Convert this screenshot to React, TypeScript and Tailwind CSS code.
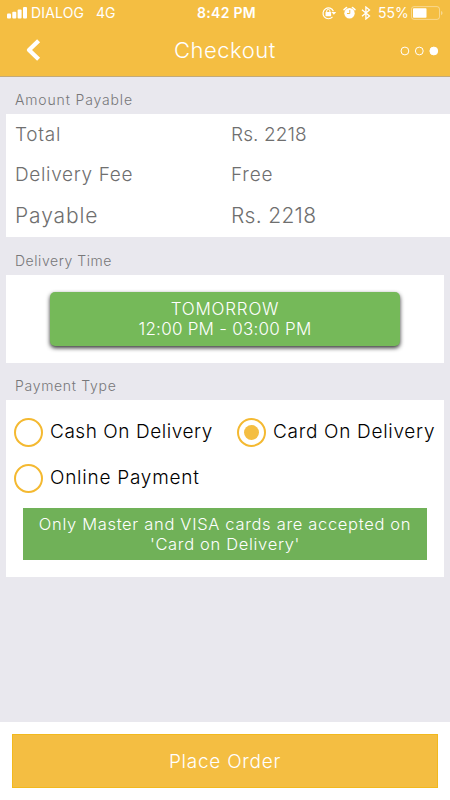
import { useState } from "react"

const amounts = [
  { label: "Total", value: "Rs. 2218", row: "h-[40px] text-[19px]", labelText: "tracking-[0.7px]", valueText: "tracking-[0.1px]" },
  { label: "Delivery Fee", value: "Free", row: "h-[41px] text-[19px]", labelText: "tracking-[0.65px]", valueText: "tracking-[0.8px]" },
  { label: "Payable", value: "Rs. 2218", row: "h-[39px] text-[21px]", labelText: "tracking-[0.9px]", valueText: "tracking-[0.3px]" },
]

const methods = [
  { id: "cash", label: "Cash On Delivery", width: "w-[223px]", text: "tracking-[0.55px]" },
  { id: "card", label: "Card On Delivery", width: "w-[206px]", text: "tracking-[0.7px]" },
  { id: "online", label: "Online Payment", width: "w-[223px]", text: "tracking-[0.75px]" },
]

function StatusBar() {
  return (
    <div className="flex h-[25px] items-center text-[14px] font-normal leading-none">
      <svg className="ml-[7px] h-[12px] w-[20px]" viewBox="0 0 20 12" fill="white">
        <rect x="0" y="6.5" width="4" height="5" rx="1" />
        <rect x="5.3" y="4.8" width="4" height="6.7" rx="1" />
        <rect x="10.6" y="2.6" width="4" height="8.9" rx="1" />
        <rect x="16" y="0" width="4" height="11.5" rx="1" />
      </svg>
      <span className="ml-[4px] w-[65px] whitespace-nowrap tracking-[0.15px]">DIALOG</span>
      <span className="w-[101px]">4G</span>
      <span className="w-[125px] whitespace-nowrap font-semibold tracking-[0.3px]">8:42 PM</span>

      {/* rotation lock */}
      <svg className="h-[14px] w-[15px]" viewBox="0 0 15 14" fill="none" stroke="white">
        <path d="M10.5 10.9A5.4 5.4 0 1 1 11.4 5.2" strokeWidth="1.2" />
        <path d="M9.4 6h4.8l-2.3 2.8z" fill="white" stroke="none" />
        <rect x="3.5" y="6" width="5.6" height="4.2" rx="0.5" fill="white" stroke="none" />
        <path d="M4.7 6.3V5a1.6 1.6 0 0 1 3.2 0v1.3" strokeWidth="1" />
      </svg>
      {/* alarm */}
      <svg className="ml-[6px] h-[14px] w-[13px]" viewBox="0 0 13 14">
        <circle cx="6.5" cy="7.2" r="5.2" fill="white" />
        <path d="M1.1 3.7L3.5 1.5M11.9 3.7L9.5 1.5" stroke="white" strokeWidth="1.6" strokeLinecap="round" />
        <path d="M6.8 4v3.5H4" stroke="#f4be42" strokeWidth="1" fill="none" />
      </svg>
      {/* bluetooth */}
      <svg className="ml-[5px] h-[14px] w-[10px]" viewBox="0 0 10 14" fill="none" stroke="white" strokeWidth="1.3">
        <path d="M1 3.7L8.5 10.1 4.9 13V1l3.6 2.9L1 10.3" />
      </svg>
      <span className="ml-[7px] w-[33px] whitespace-nowrap">55%</span>
      <svg className="h-[14px] w-[32px]" viewBox="0 0 32 14">
        <rect x="0.5" y="0.6" width="28" height="12.8" rx="2.5" fill="none" stroke="white" strokeOpacity="0.4" />
        <rect x="2" y="2.2" width="13.5" height="9.6" rx="0.8" fill="white" />
        <path d="M30 5v4.2q1.6-0.6 1.6-2.1t-1.6-2.1z" fill="white" fillOpacity="0.4" />
      </svg>
    </div>
  )
}

function SectionLabel({ children, className }: { children: string; className: string }) {
  return <h2 className={`flex items-center pl-[15px] text-[14px] text-[#777779] ${className}`}>{children}</h2>
}

export default function App() {
  const [method, setMethod] = useState("card")

  return (
    <div className="flex h-[800px] w-[450px] flex-col overflow-hidden bg-[#e9e8ee] font-['Inter',sans-serif] font-light">
      <header className="h-[77px] shrink-0 border-b border-[#c2aa7a] bg-[#f4be42] text-white">
        <StatusBar />
        <div className="flex h-[50px] items-center">
          <button className="ml-[25px] w-[149px]">
            <svg className="h-[24px] w-[16px]" viewBox="0 0 16 24" fill="none" stroke="white" strokeWidth="4.3" strokeLinejoin="round">
              <path d="M13.6 2.8L4 12l9.6 9.2" />
            </svg>
          </button>
          <h1 className="w-[226px] text-[22px] leading-none tracking-[0.5px]">Checkout</h1>
          <svg className="mt-px h-[10px] w-[40px]" viewBox="0 0 40 10" fill="none" stroke="white">
            <circle cx="4.9" cy="5" r="3.9" />
            <circle cx="19.3" cy="5" r="3.9" />
            <circle cx="33.8" cy="5" r="3.9" fill="white" />
          </svg>
        </div>
      </header>

      <SectionLabel className="h-[37px] pt-[8px] tracking-[0.85px]">Amount Payable</SectionLabel>
      <section className="ml-[6px] h-[123px] bg-white pt-px text-[#6f6f6f]">
        {amounts.map((item) => (
          <div key={item.label} className={`flex items-center pl-[9px] ${item.row}`}>
            <span className={`w-[216px] ${item.labelText}`}>{item.label}</span>
            <span className={item.valueText}>{item.value}</span>
          </div>
        ))}
      </section>

      <SectionLabel className="h-[38px] pt-[9px] tracking-[0.55px]">Delivery Time</SectionLabel>
      <section className="mx-[6px] flex h-[88px] justify-center bg-white pt-[17px]">
        <button className="h-[54px] w-[350px] rounded-[5px] bg-[#75b959] text-[17px] leading-[20px] text-white shadow-[0_2px_4px_#333]">
          <span className="block tracking-[0.8px]">TOMORROW</span>
          <span className="block tracking-[0.25px]">12:00 PM - 03:00 PM</span>
        </button>
      </section>

      <SectionLabel className="h-[37px] pt-[8px] tracking-[0.7px]">Payment Type</SectionLabel>
      <section className="mx-[6px] h-[177px] bg-white pt-[9px]">
        <div className="flex flex-wrap pl-[8px]">
          {methods.map((m) => (
            <button
              key={m.id}
              onClick={() => setMethod(m.id)}
              className={`flex h-[46px] items-center gap-[7px] whitespace-nowrap text-[19px] text-black ${m.width}`}
            >
              <span className="flex size-[29px] shrink-0 items-center justify-center rounded-full border-2 border-[#f4b931]">
                {method === m.id && <span className="size-[15px] rounded-full bg-[#f4be42]" />}
              </span>
              <span className={`pt-px ${m.text}`}>{m.label}</span>
            </button>
          ))}
        </div>
        <p className="mx-[17px] mt-[7px] h-[52px] bg-[#70b158] pt-[6px] text-center text-[16.5px] leading-[20px] tracking-[0.68px] text-white">
          Only Master and VISA cards are accepted on
          <br />
          'Card on Delivery'
        </p>
      </section>

      <footer className="mt-auto h-[78px] bg-white px-[12px] pt-[12px]">
        <button className="h-[54px] w-full border border-[#f2b91d] bg-[#f4be42] pt-[2px] text-[19px] tracking-[0.75px] text-white">
          Place Order
        </button>
      </footer>
    </div>
  )
}
